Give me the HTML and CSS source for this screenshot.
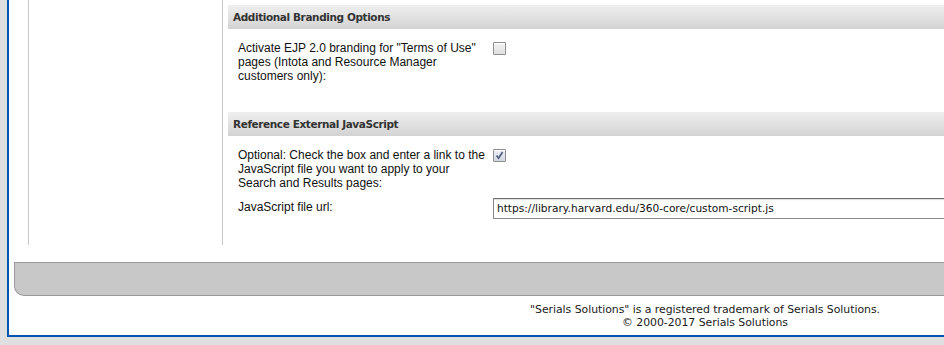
FILE: index.html
```html
<!DOCTYPE html>
<html>
<head>
<meta charset="utf-8">
<link rel="stylesheet" href="styles.css">
</head>
<body>
<div class="frame">
  <div class="main">
    <div class="nav"></div>
    <div class="content">
      <div class="sec-head">Additional Branding Options</div>
      <div class="row first">
        <div class="label">Activate EJP 2.0 branding for "Terms of Use" pages (Intota and Resource Manager customers only):</div>
        <div class="ctrl"><span class="cb"></span></div>
      </div>
      <div class="sec-head second">Reference External JavaScript</div>
      <div class="row first">
        <div class="label">Optional: Check the box and enter a link to the JavaScript file you want to apply to your Search and Results pages:</div>
        <div class="ctrl"><span class="cb checked"><svg width="9" height="9" viewBox="0 0 9 9"><path d="M1.5 4.5 L3.6 7.2 L7.6 1" fill="none" stroke="#4a5a78" stroke-width="1.6"/></svg></span></div>
      </div>
      <div class="row url">
        <div class="label">JavaScript file url:</div>
        <div class="ctrl"><div class="input">https://library.harvard.edu/360-core/custom-script.js</div></div>
      </div>
    </div>
  </div>
  <div class="bar"></div>
  <div class="footer">
    <div>"Serials Solutions" is a registered trademark of Serials Solutions.</div>
    <div>© 2000-2017 Serials Solutions</div>
  </div>
</div>
</body>
</html>
```

FILE: styles.css
```css
html, body {
  margin: 0;
  padding: 0;
  background: #dfdfdf;
  overflow: hidden;
  width: 944px;
  height: 345px;
}
.frame {
  margin-left: 7px;
  width: 1600px;
  background: #fff;
  border-left: 2px solid #0156b1;
  border-bottom: 2px solid #0156b1;
}
.main {
  display: flex;
  align-items: stretch;
}
.nav {
  margin-left: 19px;
  width: 193px;
  border-left: 1px solid #c8c8c8;
  border-right: 1px solid #c8c8c8;
  height: 245px;
}
.content {
  margin-left: 5px;
  padding-top: 5px;
  flex: 1;
}
.sec-head {
  height: 24px;
  line-height: 24px;
  padding-left: 5px;
  background: linear-gradient(#efefef, #d3d3d3);
  font-family: "DejaVu Sans", Verdana, sans-serif;
  font-weight: bold;
  font-size: 10.5px;
  letter-spacing: -0.4px;
  color: #333;
}
.sec-head.second {
  margin-top: 29px;
}
.row {
  display: flex;
  padding-left: 10px;
  font-family: "Liberation Sans", Arial, sans-serif;
  font-size: 12px;
  line-height: 14px;
  color: #111;
}
.row.first {
  padding-top: 12px;
}
.row.url {
  padding-top: 10px;
}
.label {
  width: 248px;
}
.ctrl {
  margin-left: 7px;
  padding-top: 1px;
}
.cb {
  display: flex;
  align-items: center;
  justify-content: center;
  width: 11px;
  height: 11px;
  border: 1px solid #8e8e8e;
  border-radius: 1px;
  background: linear-gradient(#f4f4f4, #dedede);
  box-shadow: inset 0 1px 1px #fff;
}
.cb.checked {
  background: linear-gradient(#eef0f6, #cfd5e2);
}
.row.url .ctrl {
  margin-top: -3px;
}
.input {
  width: 600px;
  height: 19px;
  line-height: 19px;
  border: 1px solid #8a8a8a;
  border-top-color: #6f6f6f;
  padding-left: 3px;
  font-family: "DejaVu Sans", Verdana, sans-serif;
  font-size: 10.6px;
  color: #111;
  box-shadow: inset 0 1px 1px #ddd;
}
.bar {
  margin-top: 17px;
  margin-left: 5px;
  height: 32px;
  background: #c8c8c8;
  border: 1px solid #9a9a9a;
  border-right: none;
  border-bottom-left-radius: 10px;
}
.footer {
  width: 1392px;
  padding-top: 7px;
  padding-bottom: 6px;
  text-align: center;
  font-family: "DejaVu Sans", Verdana, sans-serif;
  font-size: 10.9px;
  letter-spacing: -0.04px;
  line-height: 13px;
  color: #1a1a1a;
}
```
